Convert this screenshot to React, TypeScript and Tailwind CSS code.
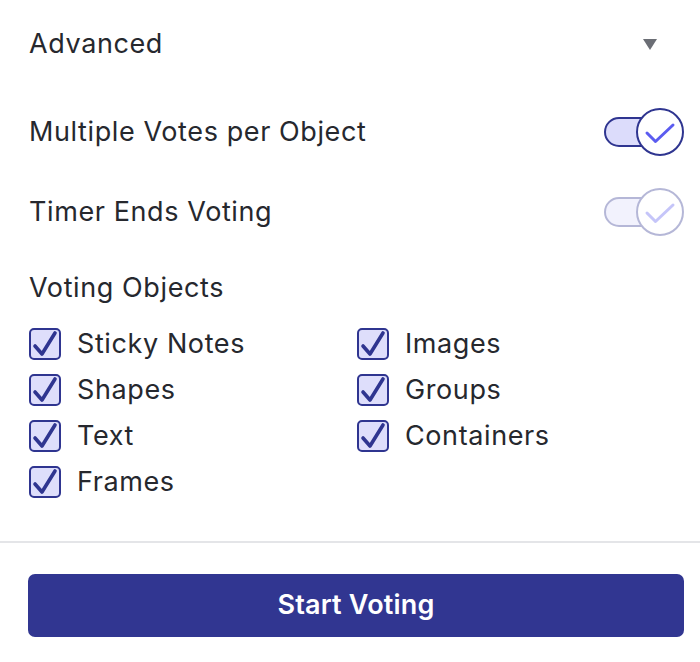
import { useState } from 'react'

const OBJECTS: [string, string][] = [
  ['Sticky Notes', 'Images'],
  ['Shapes', 'Groups'],
  ['Text', 'Containers'],
  ['Frames', ''],
]

function Toggle({ on, faded }: { on: boolean; faded?: boolean }) {
  return (
    <div className={`relative w-[80px] h-[48px] shrink-0 ${faded ? 'opacity-35' : ''}`}>
      <div className="absolute left-0 top-[9px] h-[30px] w-[66px] rounded-full border-2 border-[#2f3590] bg-[#dcdcfb]" />
      <div className="absolute right-0 top-0 h-[48px] w-[48px] rounded-full border-2 border-[#2f3590] bg-white flex items-center justify-center">
        {on && (
          <svg width="48" height="48" viewBox="0 0 48 48" className="absolute -left-[2px] -top-[2px]">
            <path d="M11 25 L19.5 33.5 L37 17" fill="none" stroke="#5b5cf0" strokeWidth="3" strokeLinecap="round" strokeLinejoin="round" />
          </svg>
        )}
      </div>
    </div>
  )
}

function Check({ label }: { label: string }) {
  const [checked, setChecked] = useState(true)
  return (
    <label className="flex items-center h-[46px] gap-[16px] cursor-pointer" onClick={() => setChecked(c => !c)}>
      <span className="relative w-[32px] h-[32px] rounded-[5px] border-2 border-[#2f3590] bg-[#dedefb] shrink-0">
        {checked && (
          <svg width="32" height="32" viewBox="0 0 32 32" className="absolute -left-[2px] -top-[2px]">
            <path d="M6 18 L13 26 L26 5" fill="none" stroke="#2f3590" strokeWidth="3.6" strokeLinecap="round" strokeLinejoin="round" />
          </svg>
        )}
      </span>
      <span>{label}</span>
    </label>
  )
}

export default function App() {
  return (
    <div className="w-[700px] h-[662px] bg-white text-[#26282e] text-[27px] tracking-[0.6px] font-['Inter',sans-serif]">
      <div className="pl-[29px] pr-[16px]">
        <div className="flex h-[88px] items-center justify-between pr-[27px]">
          <span>Advanced</span>
          <svg width="14" height="11" viewBox="0 0 14 11"><path d="M0 0 H14 L7 11 Z" fill="#6b6e75" /></svg>
        </div>

        <div className="mt-[4px] flex h-[80px] items-center justify-between">
          <span>Multiple Votes per Object</span>
          <Toggle on />
        </div>
        <div className="flex h-[80px] items-center justify-between">
          <span>Timer Ends Voting</span>
          <Toggle on faded />
        </div>

        <div className="mt-[20px] h-[32px] flex items-center">Voting Objects</div>

        <div className="mt-[17px] grid grid-cols-[328px_1fr]">
          {OBJECTS.flat().map((l, i) => (l ? <Check key={i} label={l} /> : <div key={i} />))}
        </div>
      </div>

      <div className="mt-[36px] border-t-2 border-[#e4e5e8]" />

      <div className="pl-[28px] pr-[16px] pt-[31px]">
        <button className="w-full h-[63px] rounded-[7px] bg-[#313691] text-white font-semibold text-[27px] tracking-[0.2px]">
          Start Voting
        </button>
      </div>
    </div>
  )
}
